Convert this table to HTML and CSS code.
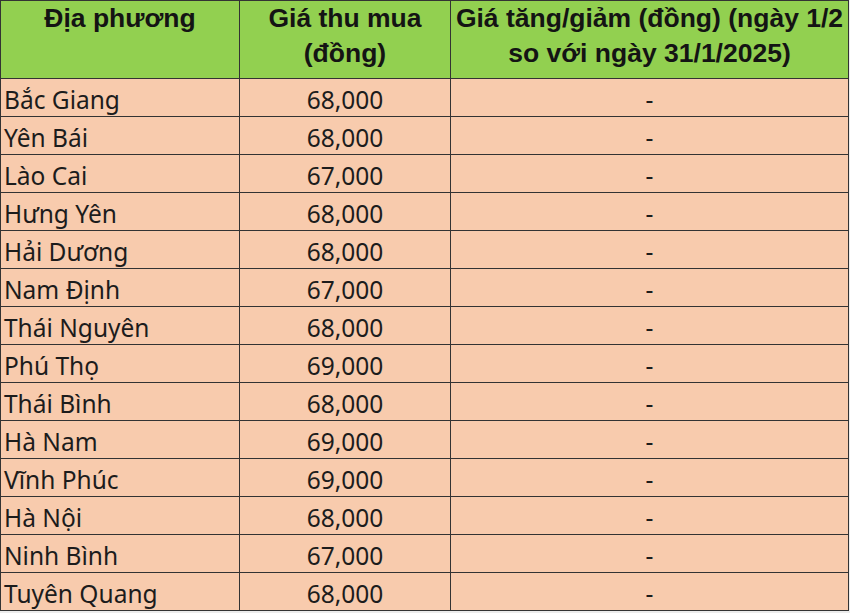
FILE: index.html
```html
<!DOCTYPE html>
<html lang="vi">
<head>
<meta charset="utf-8">
<title>Giá thu mua</title>
<link rel="stylesheet" href="styles.css">
</head>
<body>
<table class="price-table">
  <colgroup>
    <col class="c1">
    <col class="c2">
    <col class="c3">
  </colgroup>
  <thead>
    <tr>
      <th>Địa phương</th>
      <th>Giá thu mua<br>(đồng)</th>
      <th>Giá tăng/giảm (đồng) (ngày 1/2<br>so với ngày 31/1/2025)</th>
    </tr>
  </thead>
  <tbody>
    <tr><td class="name">Bắc Giang</td><td class="num">68,000</td><td class="chg">-</td></tr>
    <tr><td class="name">Yên Bái</td><td class="num">68,000</td><td class="chg">-</td></tr>
    <tr><td class="name">Lào Cai</td><td class="num">67,000</td><td class="chg">-</td></tr>
    <tr><td class="name">Hưng Yên</td><td class="num">68,000</td><td class="chg">-</td></tr>
    <tr><td class="name">Hải Dương</td><td class="num">68,000</td><td class="chg">-</td></tr>
    <tr><td class="name">Nam Định</td><td class="num">67,000</td><td class="chg">-</td></tr>
    <tr><td class="name">Thái Nguyên</td><td class="num">68,000</td><td class="chg">-</td></tr>
    <tr><td class="name">Phú Thọ</td><td class="num">69,000</td><td class="chg">-</td></tr>
    <tr><td class="name">Thái Bình</td><td class="num">68,000</td><td class="chg">-</td></tr>
    <tr><td class="name">Hà Nam</td><td class="num">69,000</td><td class="chg">-</td></tr>
    <tr><td class="name">Vĩnh Phúc</td><td class="num">69,000</td><td class="chg">-</td></tr>
    <tr><td class="name">Hà Nội</td><td class="num">68,000</td><td class="chg">-</td></tr>
    <tr><td class="name">Ninh Bình</td><td class="num">67,000</td><td class="chg">-</td></tr>
    <tr><td class="name">Tuyên Quang</td><td class="num">68,000</td><td class="chg">-</td></tr>
  </tbody>
</table>
</body>
</html>
```

FILE: styles.css
```css
html, body {
  margin: 0;
  padding: 0;
  background: #ececec;
}

.price-table {
  border-collapse: collapse;
  table-layout: fixed;
  width: 848px;
  font-family: "Noto Sans", "Open Sans", sans-serif;
  color: #1c1c1c;
}

.c1 { width: 239px; }
.c2 { width: 211px; }
.c3 { width: 398px; }

.price-table th,
.price-table td {
  border: 1px solid #333333;
  padding: 0;
}

.price-table th {
  background: #92d050;
  font-family: "Liberation Sans", Arial, sans-serif;
  font-weight: bold;
  font-size: 26.5px;
  line-height: 35px;
  height: 78px;
  vertical-align: top;
  text-align: center;
  color: #141414;
  box-sizing: border-box;
}

.price-table td {
  background: #f8cbad;
  font-size: 24.5px;
  height: 38px;
  line-height: 31px;
  padding-top: 5px;
  box-sizing: border-box;
  vertical-align: top;
  white-space: nowrap;
}

.price-table td.name {
  text-align: left;
  padding-left: 3px;
}

.price-table td.num,
.price-table td.chg {
  text-align: center;
}
```
